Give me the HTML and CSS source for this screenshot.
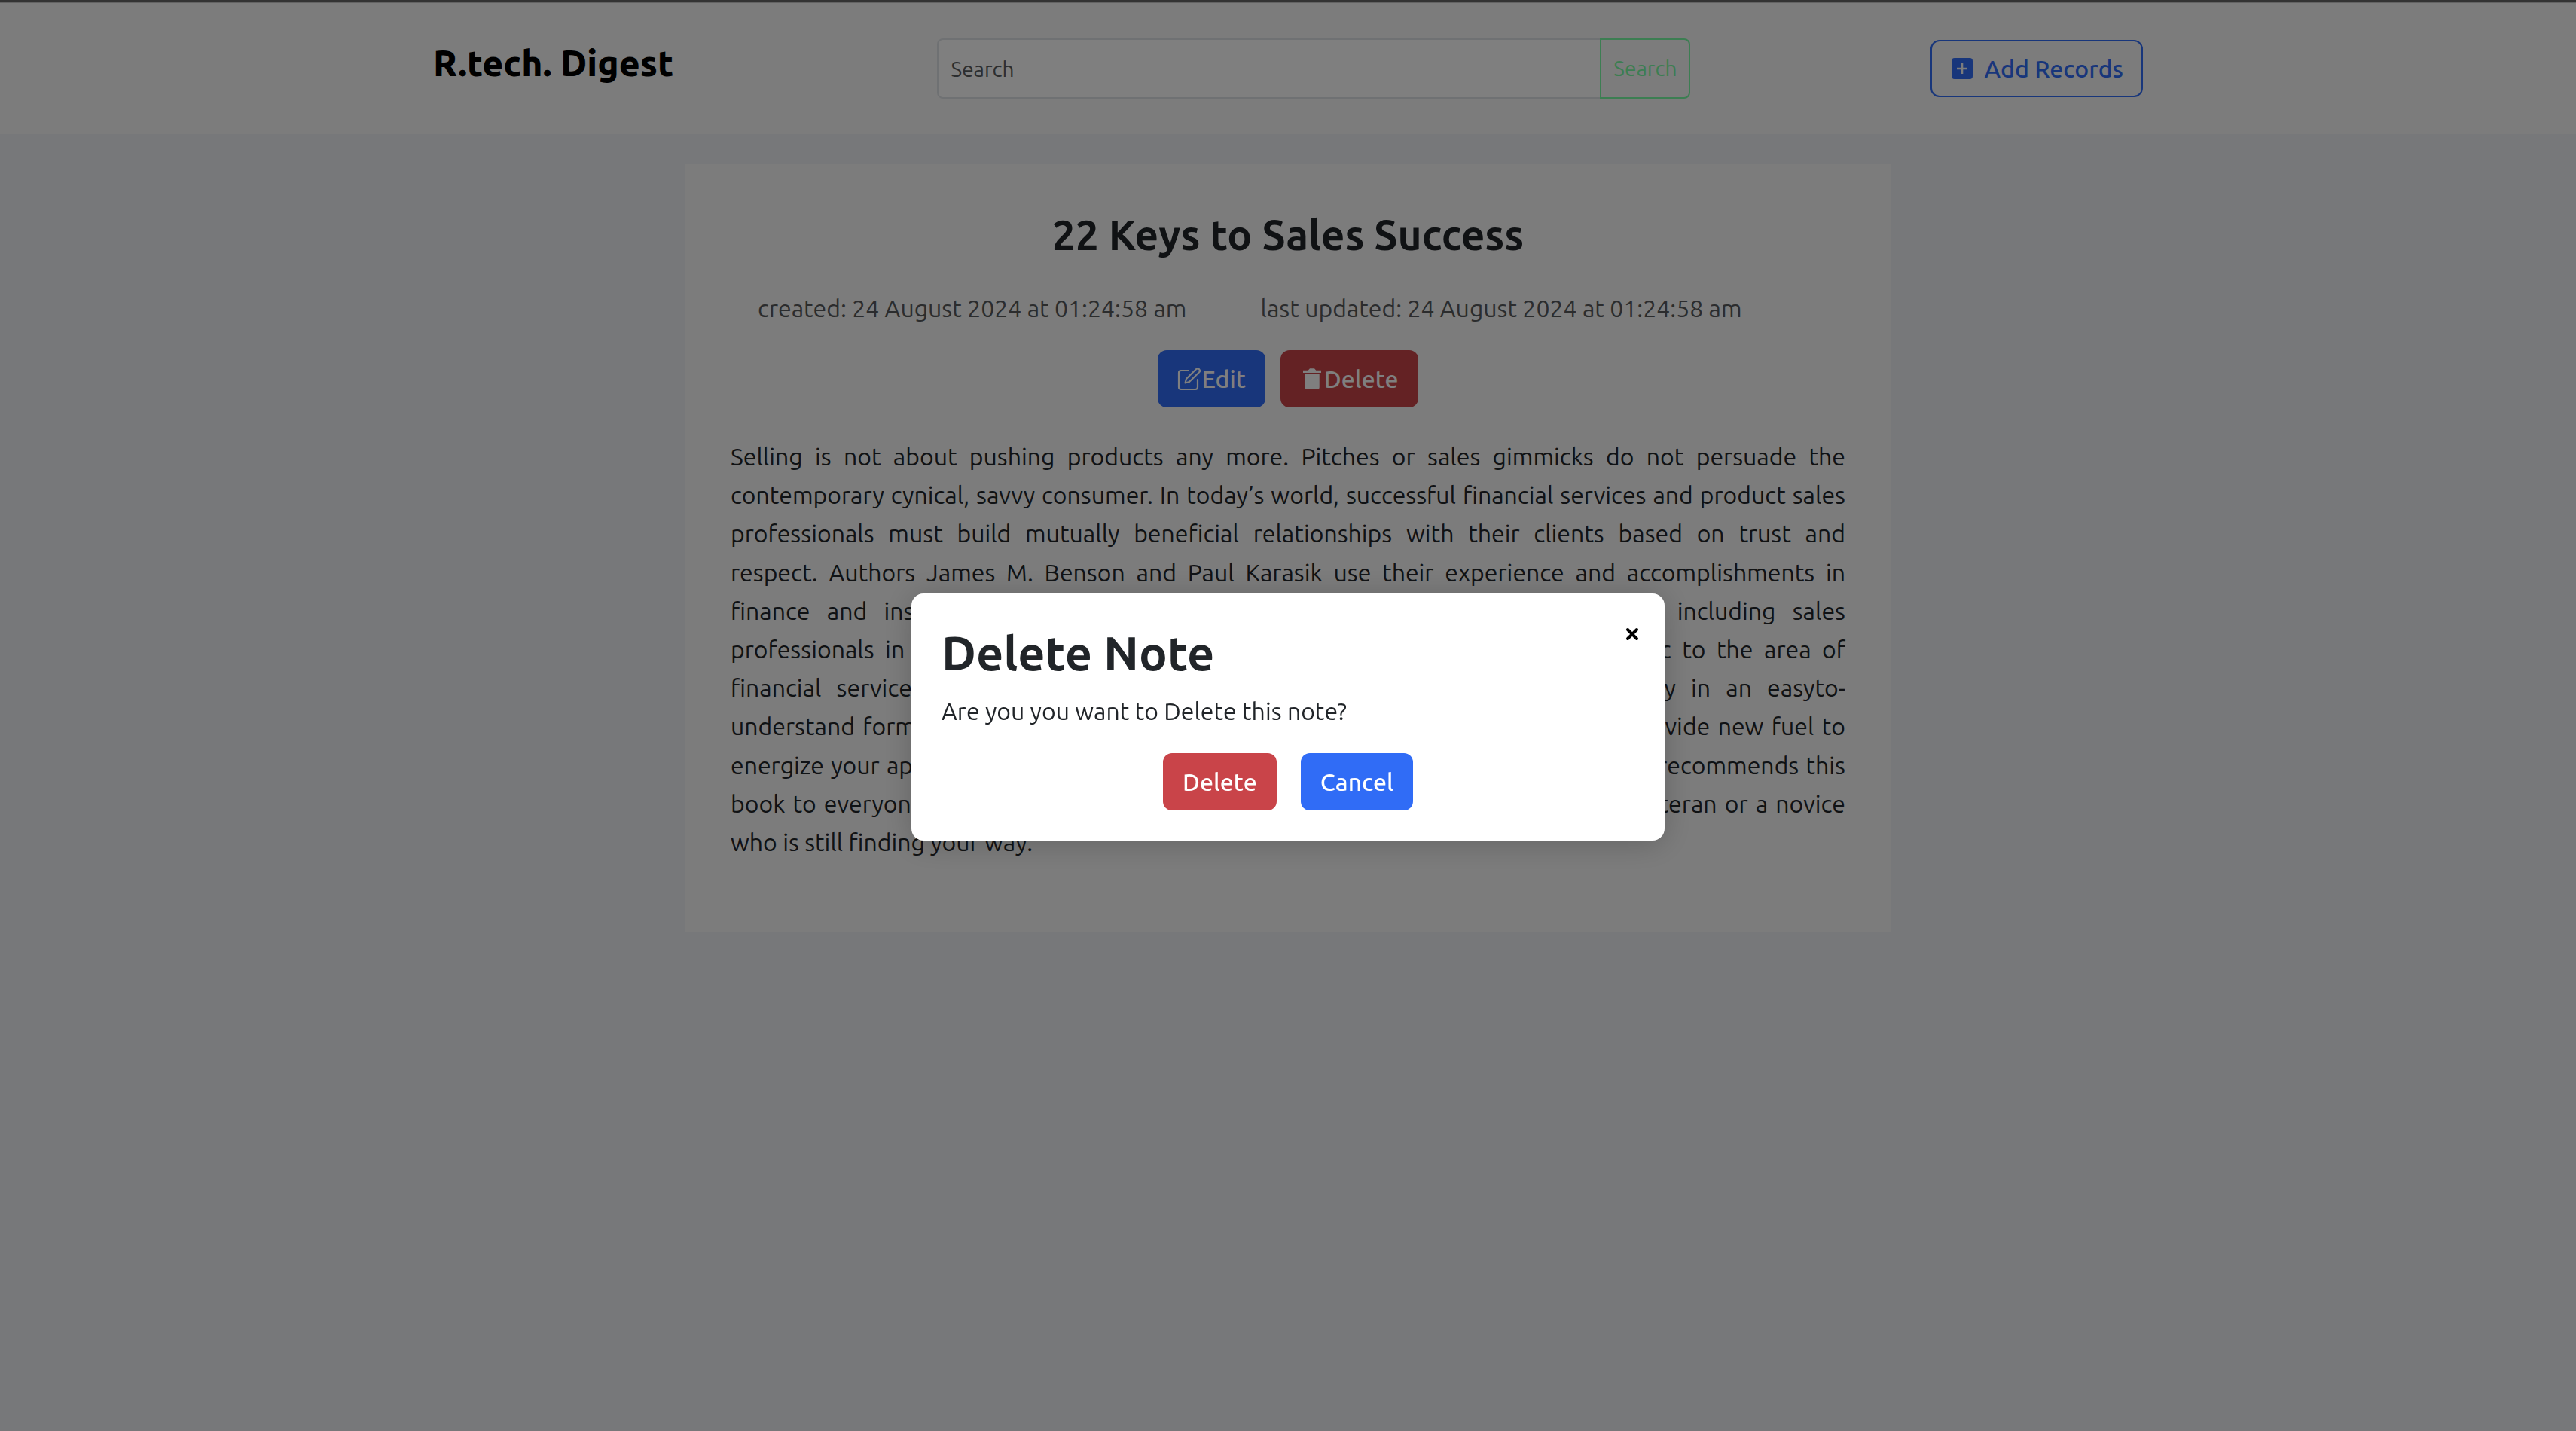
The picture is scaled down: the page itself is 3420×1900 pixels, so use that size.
FILE: index.html
```html
<!DOCTYPE html>
<html lang="en">
<head>
<meta charset="utf-8">
<title>R.tech. Digest</title>
<link rel="stylesheet" href="styles.css">
</head>
<body>
<header class="topbar">
  <div class="topbar-inner">
    <a class="brand" href="#">R.tech. Digest</a>
    <form class="search" role="search">
      <input class="search-input" type="search" placeholder="Search" aria-label="Search">
      <button class="search-button" type="button">Search</button>
    </form>
    <button class="button button-outline" type="button">
      <svg class="icon" viewBox="0 0 32 32" aria-hidden="true"><path fill="currentColor" fill-rule="evenodd" d="M6 2h20a4 4 0 0 1 4 4v20a4 4 0 0 1-4 4H6a4 4 0 0 1-4-4V6a4 4 0 0 1 4-4zm8.700 7v5.700H9v2.600h5.700V23h2.600v-5.700H23v-2.600h-5.700V9z"/></svg>
      Add Records
    </button>
  </div>
</header>
<main class="note">
  <h1 class="note-title">22 Keys to Sales Success</h1>
  <div class="note-meta">
    <span>created: 24 August 2024 at 01:24:58 am</span>
    <span>last updated: 24 August 2024 at 01:24:58 am</span>
  </div>
  <div class="note-actions">
    <button class="button button-primary" type="button"><svg class="icon" viewBox="0 0 32 32" aria-hidden="true"><g fill="none" stroke="currentColor" stroke-width="2.200" stroke-linecap="round" stroke-linejoin="round"><path d="M15 5H5a3 3 0 0 0-3 3v19a3 3 0 0 0 3 3h19a3 3 0 0 0 3-3V17"/><path d="M10.500 21.500l1.500-5.500L25 3.200a2.900 2.900 0 0 1 4.100 4.100L16 20z"/></g></svg>Edit</button>
    <button class="button button-danger" type="button"><svg class="icon" viewBox="0 0 32 32" aria-hidden="true"><path fill="currentColor" d="M4 4.700h6.700L13 2.200h6l2.300 2.500H28V8H4zM6.700 9.300h19v18a2.500 2.500 0 0 1-2.500 2.500h-14a2.500 2.500 0 0 1-2.500-2.500z"/></svg>Delete</button>
  </div>
  <p class="note-body">Selling is not about pushing products any more. Pitches or sales gimmicks do not persuade the<br>
    contemporary cynical, savvy consumer. In today’s world, successful financial services and product sales<br>
    professionals must build mutually beneficial relationships with their clients based on trust and<br>
    respect. Authors James M. Benson and Paul Karasik use their experience and accomplishments in<br>
    finance and insurance to show you the keys that open doors for everyone, including sales<br>
    professionals in any field. While many of the tips are universal, others are specific to the area of<br>
    financial services. The authors present each principle and every selling strategy in an easyto-<br>
    understand format that is quick to read, and their many fresh insights will surely provide new fuel to<br>
    energize your approach to selling every single day. For these reasons the digest also recommends this<br>
    book to everyone in the business of financial selling, whether you are a seasoned veteran or a novice<br>
    <span class="note-last">who is still finding your way.</span></p>
</main>
<div class="overlay">
  <section class="dialog" role="dialog" aria-modal="true" aria-labelledby="dialog-title">
    <button class="dialog-close" type="button" aria-label="Close"><svg class="icon-close" viewBox="0 0 18 18" aria-hidden="true"><path stroke="currentColor" stroke-width="4" stroke-linecap="round" d="M3 3l12 12M15 3L3 15"/></svg></button>
    <h2 class="dialog-title" id="dialog-title">Delete Note</h2>
    <p class="dialog-text">Are you you want to Delete this note?</p>
    <div class="dialog-actions">
      <button class="button button-danger" type="button">Delete</button>
      <button class="button button-primary" type="button">Cancel</button>
    </div>
  </section>
</div>
</body>
</html>
```
FILE: styles.css
```css
* { box-sizing: border-box; }

body {
  margin: 0;
  background: #eef0f4;
  color: #212529;
  font-family: Ubuntu, "Noto Sans", sans-serif;
  font-size: 32px;
  line-height: 48px;
}

h1, h2, p { margin: 0; }
button, input { font: inherit; }

.topbar {
  border-top: 2px solid #666;
  background: #f8f8f8;
  box-shadow: inset 0 2px #c6c6c6;
  padding: 49px 40px 47px;
}

.topbar-inner {
  display: flex;
  align-items: center;
  justify-content: space-between;
  max-width: 2270px;
  margin: 0 auto;
}

.brand {
  margin-right: 32px;
  padding-bottom: 16px;
  color: #000;
  font-size: 48px;
  font-weight: 800;
  text-decoration: none;
}

.search { display: flex; flex: 0 1 1000px; }

.search-input,
.search-button {
  height: 80px;
  padding: 0 16px;
  border: 2px solid #dee2e6;
  font-size: 28px;
}

.search-input {
  flex: 1;
  min-width: 0;
  background: #fff;
  border-radius: 8px 0 0 8px;
  border-right: 0;
}

.search-input::placeholder { color: #595c5f; opacity: 1; }

.search-button {
  border-color: #78fca4;
  border-radius: 0 8px 8px 0;
  background: transparent;
  color: #78fca4;
}

.button {
  display: inline-flex;
  align-items: center;
  height: 76px;
  padding: 0 24px;
  border: 2px solid transparent;
  border-radius: 12px;
  color: #fff;
  font-weight: 500;
}

.button-outline {
  gap: 14px;
  border-color: #306cf6;
  background: transparent;
  color: #306cf6;
}

.button-primary { background: #306cf6; }
.button-danger { background: #c94449; }

.icon { width: 32px; height: 32px; }

.note {
  max-width: 1600px;
  margin: 40px auto;
  padding: 60px 60px 93px;
  background: #f8f8f8;
}

.note-title {
  font-size: 55px;
  font-weight: 600;
  line-height: 68px;
  text-align: center;
}

.note-meta {
  display: flex;
  gap: 98px;
  margin: 39px 0 32px;
  padding-left: 36px;
  color: #56595b;
}

.note-actions {
  display: flex;
  justify-content: center;
  gap: 20px;
  margin-bottom: 40px;
}

.note-body {
  line-height: 1.6;
  text-align: justify;
  text-align-last: justify;
}

.note-last { display: block; text-align-last: left; }

.overlay {
  position: fixed;
  inset: 0;
  display: flex;
  align-items: flex-start;
  justify-content: center;
  padding-top: 788px;
  background: rgba(0, 0, 0, 0.5);
}

.dialog {
  position: relative;
  width: 1000px;
  padding: 40px;
  border-radius: 16px;
  background: #fff;
  box-shadow: 0 4px 40px rgba(0, 0, 0, 0.2);
}

.dialog-close {
  position: absolute;
  top: 39px;
  right: 28px;
  padding: 0 6px;
  border: 0;
  background: none;
  color: #000;
  line-height: 24px;
}

.icon-close { width: 18px; height: 18px; }

.dialog-title {
  margin-bottom: 15px;
  font-size: 63px;
  font-weight: 600;
  line-height: 77px;
}

.dialog-actions {
  display: flex;
  justify-content: center;
  gap: 32px;
  margin-top: 32px;
}
```
